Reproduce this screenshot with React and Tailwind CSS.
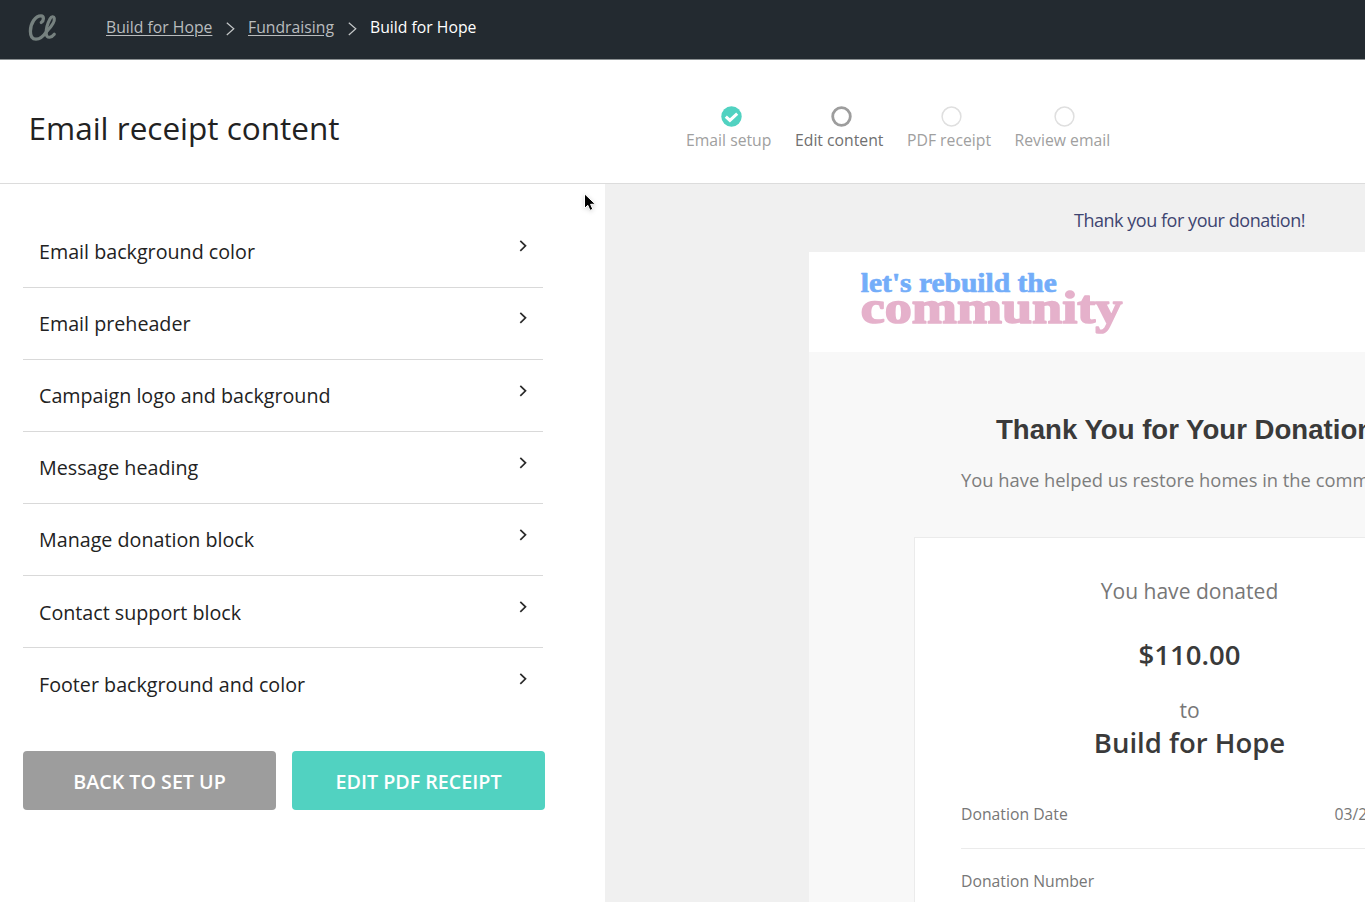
import React from "react";

const sections = [
  "Email background color",
  "Email preheader",
  "Campaign logo and background",
  "Message heading",
  "Manage donation block",
  "Contact support block",
  "Footer background and color",
];

function Logo() {
  return (
    <svg className="block h-[30px] w-[30px]" viewBox="0 0 30 30" fill="none" stroke="#76817f" strokeLinecap="round" strokeLinejoin="round">
      <path strokeWidth="3.3" d="M13.3 9.4 C15.8 8 16.4 2.9 13 2.8 C7.4 2.7 2.4 10.3 2.4 18.2 C2.4 23.4 4.4 26.2 8 26.2 C12.4 26.2 16 22.4 18.7 18.4" />
      <path strokeWidth="3.1" d="M18.7 18.4 C22.4 14.6 27.1 9.4 26.3 5.2 C25.9 3.2 23.5 3.2 22.1 5.8 C19.7 10.2 18 16.4 18.2 20.4 C18.3 23.2 19.6 24.5 21.6 24.3 C23.6 24.1 25.1 22.7 26.3 21.2" />
    </svg>
  );
}

function Crumb() {
  return (
    <svg className="mt-[22px] h-[14px] w-[9px]" viewBox="0 0 9 14" fill="none" stroke="#c4c7c8" strokeWidth="1.2">
      <path d="M0.8 0.7 L7.8 6.8 L0.8 13" />
    </svg>
  );
}

function Chevron() {
  return (
    <svg className="mt-[24.42px] h-[12px] w-[8px]" viewBox="0 0 8 12" fill="none" stroke="#2b2b2b" strokeWidth="1.7">
      <path d="M1.3 0.9 L6.5 5.8 L1.3 10.8" />
    </svg>
  );
}

function Done() {
  return (
    <svg className="block h-[21px] w-[21px]" viewBox="0 0 21 21" fill="none">
      <circle cx="10.5" cy="10.5" r="10.2" fill="#51d2c1" />
      <path d="M4.8 10.6 L8.9 14.4 L16.2 7.6" stroke="#fff" strokeWidth="3.1" />
    </svg>
  );
}

function Circle({ active }) {
  return (
    <svg className="block h-[21px] w-[21px]" viewBox="0 0 21 21" fill="none">
      {active ? (
        <circle cx="10.5" cy="10.5" r="8.8" stroke="#9d9d9d" strokeWidth="2.8" />
      ) : (
        <circle cx="10.5" cy="10.5" r="9.4" stroke="#dfdfdf" strokeWidth="1.5" />
      )}
    </svg>
  );
}

function CampaignLogo() {
  return (
    <svg className="block h-[64px] w-[266px] overflow-visible" viewBox="0 0 266 64" fontFamily="'Liberation Serif', serif" fontWeight="700" strokeLinejoin="round">
      <text x="0.8" y="21.3" fontSize="27" fill="#73adf9" stroke="#73adf9" strokeWidth="0.7" textLength="196" lengthAdjust="spacingAndGlyphs">let's rebuild the</text>
      <text x="0.8" y="52" fontSize="47" fill="#e5b1cb" stroke="#e5b1cb" strokeWidth="1.7" textLength="261.5" lengthAdjust="spacingAndGlyphs">community</text>
    </svg>
  );
}

export default function App() {
  return (
    <div className="flex h-[902px] w-[1365px] flex-col overflow-hidden bg-white font-['Open_Sans',sans-serif] text-[#222]">
      <header className="flex h-[60px] shrink-0 items-start border-b border-[#8b9092] bg-[#232a30] text-[15.75px] leading-[22px]">
        <div className="ml-[28px] mt-[13px] w-[78px]"><Logo /></div>
        <div className="mt-[16px] w-[120px] whitespace-nowrap text-[#b9bcbe] underline underline-offset-2">Build for Hope</div>
        <div className="w-[22px]"><Crumb /></div>
        <div className="mt-[16px] w-[100px] whitespace-nowrap text-[#b9bcbe] underline underline-offset-2">Fundraising</div>
        <div className="w-[22px]"><Crumb /></div>
        <div className="mt-[16px] whitespace-nowrap text-white">Build for Hope</div>
      </header>

      <div className="flex h-[124px] shrink-0 items-start border-b border-[#dcdcdc]">
        <h1 className="ml-[28.5px] mt-[45px] w-[657.5px] whitespace-nowrap text-[31.5px] leading-[45px]">Email receipt content</h1>
        <div className="mt-[46px] flex text-[15.75px] leading-[22px] text-[#a0a0a0]">
          <div className="flex w-[109px] flex-col">
            <div className="pl-[34.5px]"><Done /></div>
            <span className="mt-[2px] whitespace-nowrap">Email setup</span>
          </div>
          <div className="flex w-[112px] flex-col">
            <div className="pl-[36px]"><Circle active /></div>
            <span className="mt-[2px] whitespace-nowrap text-[#707070]">Edit content</span>
          </div>
          <div className="flex w-[107.5px] flex-col">
            <div className="pl-[34px]"><Circle /></div>
            <span className="mt-[2px] whitespace-nowrap">PDF receipt</span>
          </div>
          <div className="flex flex-col">
            <div className="pl-[39.5px]"><Circle /></div>
            <span className="mt-[2px] whitespace-nowrap">Review email</span>
          </div>
        </div>
      </div>

      <div className="flex min-h-0 flex-1">
        <aside className="relative w-[605px] shrink-0 pl-[23px] pt-[32px]">
          <ul className="w-[520px]">
            {sections.map((s) => (
              <li key={s} className="flex h-[72.06px] items-start justify-between border-b border-[#d9d9d9] pl-[16px] pr-[16px] last:border-transparent">
                <span className="mt-[22.3px] whitespace-nowrap text-[19.7px] leading-[28px]">{s}</span>
                <Chevron />
              </li>
            ))}
          </ul>
          <div className="mt-[30.3px] flex gap-[16px] text-[19.7px] font-semibold text-white">
            <button className="h-[59px] w-[253px] rounded-[4px] bg-[#9d9d9d] pt-[3px]">BACK TO SET UP</button>
            <button className="h-[59px] w-[253px] rounded-[4px] bg-[#51d2c1] pt-[3px]">EDIT PDF RECEIPT</button>
          </div>
          <svg className="absolute left-[581px] top-[7px] h-[24px] w-[18px] drop-shadow-sm" viewBox="0 0 18 24">
            <path d="M3.5 2.8 V17.4 L6.8 14.3 L9 19.4 L11.8 18.2 L9.6 13.3 L14.4 13.2 Z" fill="#000" stroke="#fff" strokeWidth="1" />
          </svg>
        </aside>

        <main className="flex-1 overflow-hidden bg-[#f0f0f0] pl-[204px]">
          <div className="w-[761px]">
            <p className="h-[68px] pt-[23px] text-center text-[18px] leading-[26px] tracking-[-0.46px] text-[#3e4570]">Thank you for your donation!</p>
            <div className="h-[100px] bg-white pl-[51px] pt-[19px]"><CampaignLogo /></div>
            <div className="h-[700px] bg-[#f8f8f8]">
              <h2 className="pl-[187px] pt-[60px] font-['Liberation_Sans',sans-serif] text-[27.6px] font-bold leading-[36px] text-[#3a3a3a]">Thank You for Your Donation!</h2>
              <p className="ml-[152px] mt-[19px] whitespace-nowrap text-[18.35px] leading-[25px] text-[#7d7d7d]">You have helped us restore homes in the community.</p>
              <div className="ml-[105px] mt-[45px] h-[500px] w-[551px] border border-[#ebebeb] bg-white px-[46px] text-center text-[#777]">
                <p className="mt-[38px] text-[21.05px] leading-[30px]">You have donated</p>
                <p className="mt-[30px] text-[27.5px] font-semibold leading-[38px] text-[#3a3a3a]">$110.00</p>
                <p className="mt-[21px] text-[21.05px] leading-[30px]">to</p>
                <p className="mt-[-1px] text-[27.5px] font-semibold leading-[38px] text-[#3a3a3a]">Build for Hope</p>
                <div className="mt-[41px] flex h-[46px] justify-between border-b border-[#ebebeb] text-[15.75px] leading-[22px]">
                  <span>Donation Date</span>
                  <span>03/28/2023</span>
                </div>
                <div className="mt-[21px] flex h-[46px] justify-between text-[15.75px] leading-[22px]">
                  <span>Donation Number</span>
                </div>
              </div>
            </div>
          </div>
        </main>
      </div>
    </div>
  );
}
